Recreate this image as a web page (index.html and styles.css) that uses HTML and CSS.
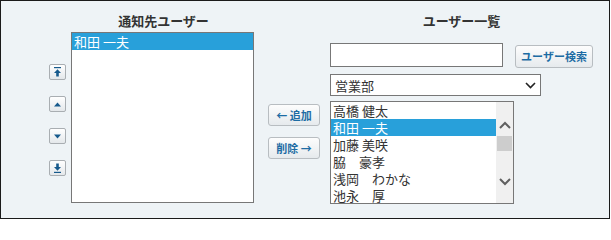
FILE: index.html
```html
<!DOCTYPE html>
<html lang="ja">
<head>
<meta charset="utf-8">
<title>通知先ユーザー</title>
<link rel="stylesheet" href="styles.css">
</head>
<body>
<div class="panel">
  <div class="left">
    <div class="heading left-heading">通知先ユーザー</div>
    <div class="left-body">
      <div class="order-btns">
        <button class="order-btn" title="一番上へ">
          <svg width="7" height="10" viewBox="0 0 7 10"><rect x="0" y="0" width="7" height="1.2"/><path d="M3.5 2.2 L7 6 H0 Z"/><rect x="2.2" y="6" width="2.6" height="3.5"/></svg>
        </button>
        <button class="order-btn" title="上へ">
          <svg width="7" height="5" viewBox="0 0 7 5"><path d="M3.5 0.5 L7 4.5 H0 Z"/></svg>
        </button>
        <button class="order-btn" title="下へ">
          <svg width="7" height="5" viewBox="0 0 7 5"><path d="M0 0.5 H7 L3.5 4.5 Z"/></svg>
        </button>
        <button class="order-btn" title="一番下へ">
          <svg width="7" height="10" viewBox="0 0 7 10"><rect x="2.2" y="0.5" width="2.6" height="3.5"/><path d="M0 4 H7 L3.5 7.8 Z"/><rect x="0" y="8.8" width="7" height="1.2"/></svg>
        </button>
      </div>
      <div class="listbox target-list">
        <div class="item selected">和田 一夫</div>
      </div>
    </div>
  </div>
  <div class="middle">
    <button class="btn move-btn">← 追加</button>
    <button class="btn move-btn">削除 →</button>
  </div>
  <div class="right">
    <div class="heading">ユーザー一覧</div>
    <div class="search-row">
      <div class="text-input"></div>
      <button class="btn search-btn">ユーザー検索</button>
    </div>
    <div class="select">
      <span class="select-text">営業部</span>
      <svg class="select-arrow" width="11" height="7" viewBox="0 0 11 7"><path d="M1 1 L5.5 5.5 L10 1" fill="none" stroke="#222" stroke-width="1.6"/></svg>
    </div>
    <div class="listbox user-list">
      <div class="items">
        <div class="item">高橋 健太</div>
        <div class="item selected">和田 一夫</div>
        <div class="item">加藤 美咲</div>
        <div class="item">脇　豪孝</div>
        <div class="item">浅岡　わかな</div>
        <div class="item">池永　厚</div>
      </div>
      <div class="scrollbar">
        <div class="sb-btn">
          <svg width="12" height="8" viewBox="0 0 12 8"><path d="M1 7 L6 2 L11 7" fill="none" stroke="#606060" stroke-width="2"/></svg>
        </div>
        <div class="sb-thumb"></div>
        <div class="sb-space"></div>
        <div class="sb-btn sb-down">
          <svg width="12" height="8" viewBox="0 0 12 8"><path d="M1 1 L6 6 L11 1" fill="none" stroke="#606060" stroke-width="2"/></svg>
        </div>
      </div>
    </div>
  </div>
</div>
</body>
</html>
```

FILE: styles.css
```css
html, body {
  margin: 0;
  padding: 0;
  background: #ffffff;
}

body {
  font-family: "Noto Sans CJK JP", "Noto Sans", sans-serif;
  color: #333333;
}

.panel {
  box-sizing: border-box;
  width: 610px;
  height: 219px;
  border: 1px solid #1a1a1a;
  background: #eef3f6;
  display: flex;
  align-items: flex-start;
  padding-top: 11px;
}

.heading {
  height: 17px;
  line-height: 17px;
  font-size: 13px;
  font-weight: bold;
  text-align: center;
  color: #333333;
}

/* left column */
.left {
  margin-left: 48px;
  width: 205px;
}

.left-heading {
  margin-left: 24px;
  margin-bottom: 3px;
}

.left-body {
  display: flex;
  gap: 5px;
}

.order-btns {
  width: 17px;
  display: flex;
  flex-direction: column;
  gap: 16px;
  padding-top: 32px;
}

.order-btn {
  box-sizing: border-box;
  width: 17px;
  height: 16px;
  padding: 0;
  margin: 0;
  border: 1px solid #a9aeb2;
  border-radius: 2px;
  background: linear-gradient(#ffffff, #e4e8eb);
  display: flex;
  align-items: center;
  justify-content: center;
  fill: #175a8c;
}

.listbox {
  box-sizing: border-box;
  border: 1px solid #777777;
  background: #ffffff;
  overflow: hidden;
}

.target-list {
  width: 183px;
  height: 171px;
}

.item {
  height: 17px;
  line-height: 17px;
  font-size: 13px;
  padding-left: 2px;
  white-space: nowrap;
  color: #333333;
}

.item.selected {
  background: #28a0da;
  color: #ffffff;
}

/* middle */
.middle {
  margin-left: 14px;
  padding-top: 92px;
  display: flex;
  flex-direction: column;
  gap: 11px;
}

.btn {
  box-sizing: border-box;
  margin: 0;
  padding: 0;
  border: 1px solid #b8bdc1;
  border-radius: 3px;
  background: linear-gradient(#fdfdfd, #e6eaed);
  color: #1d6ca4;
  font-family: "Noto Sans CJK JP", "Noto Sans", sans-serif;
  font-size: 11px;
  font-weight: bold;
  line-height: 1;
  white-space: nowrap;
}

.move-btn {
  width: 52px;
  height: 22px;
}

/* right column */
.right {
  margin-left: 10px;
  width: 263px;
}

.search-row {
  margin-top: 14px;
  display: flex;
  align-items: flex-start;
}

.text-input {
  box-sizing: border-box;
  width: 173px;
  height: 24px;
  border: 1px solid #777777;
  background: #ffffff;
}

.search-btn {
  margin-left: 12px;
  margin-top: 2px;
  width: 78px;
  height: 23px;
}

.select {
  box-sizing: border-box;
  margin-top: 6px;
  width: 211px;
  height: 22px;
  border: 1px solid #777777;
  background: #ffffff;
  display: flex;
  align-items: center;
  justify-content: space-between;
  padding: 0 4px 0 4px;
}

.select-text {
  font-size: 13px;
  color: #333333;
}

.user-list {
  margin-top: 5px;
  width: 184px;
  height: 103px;
  display: flex;
}

.items {
  flex: 1;
}

.scrollbar {
  width: 17px;
  background: #f0f0f0;
  display: flex;
  flex-direction: column;
  padding-top: 14px;
}

.sb-btn {
  height: 17px;
  display: flex;
  align-items: center;
  justify-content: center;
}

.sb-thumb {
  margin: 3px 1px 0 1px;
  height: 15px;
  background: #cdcdcd;
}

.sb-space {
  flex: 1;
}

.sb-down {
  margin-bottom: 13px;
}
```
